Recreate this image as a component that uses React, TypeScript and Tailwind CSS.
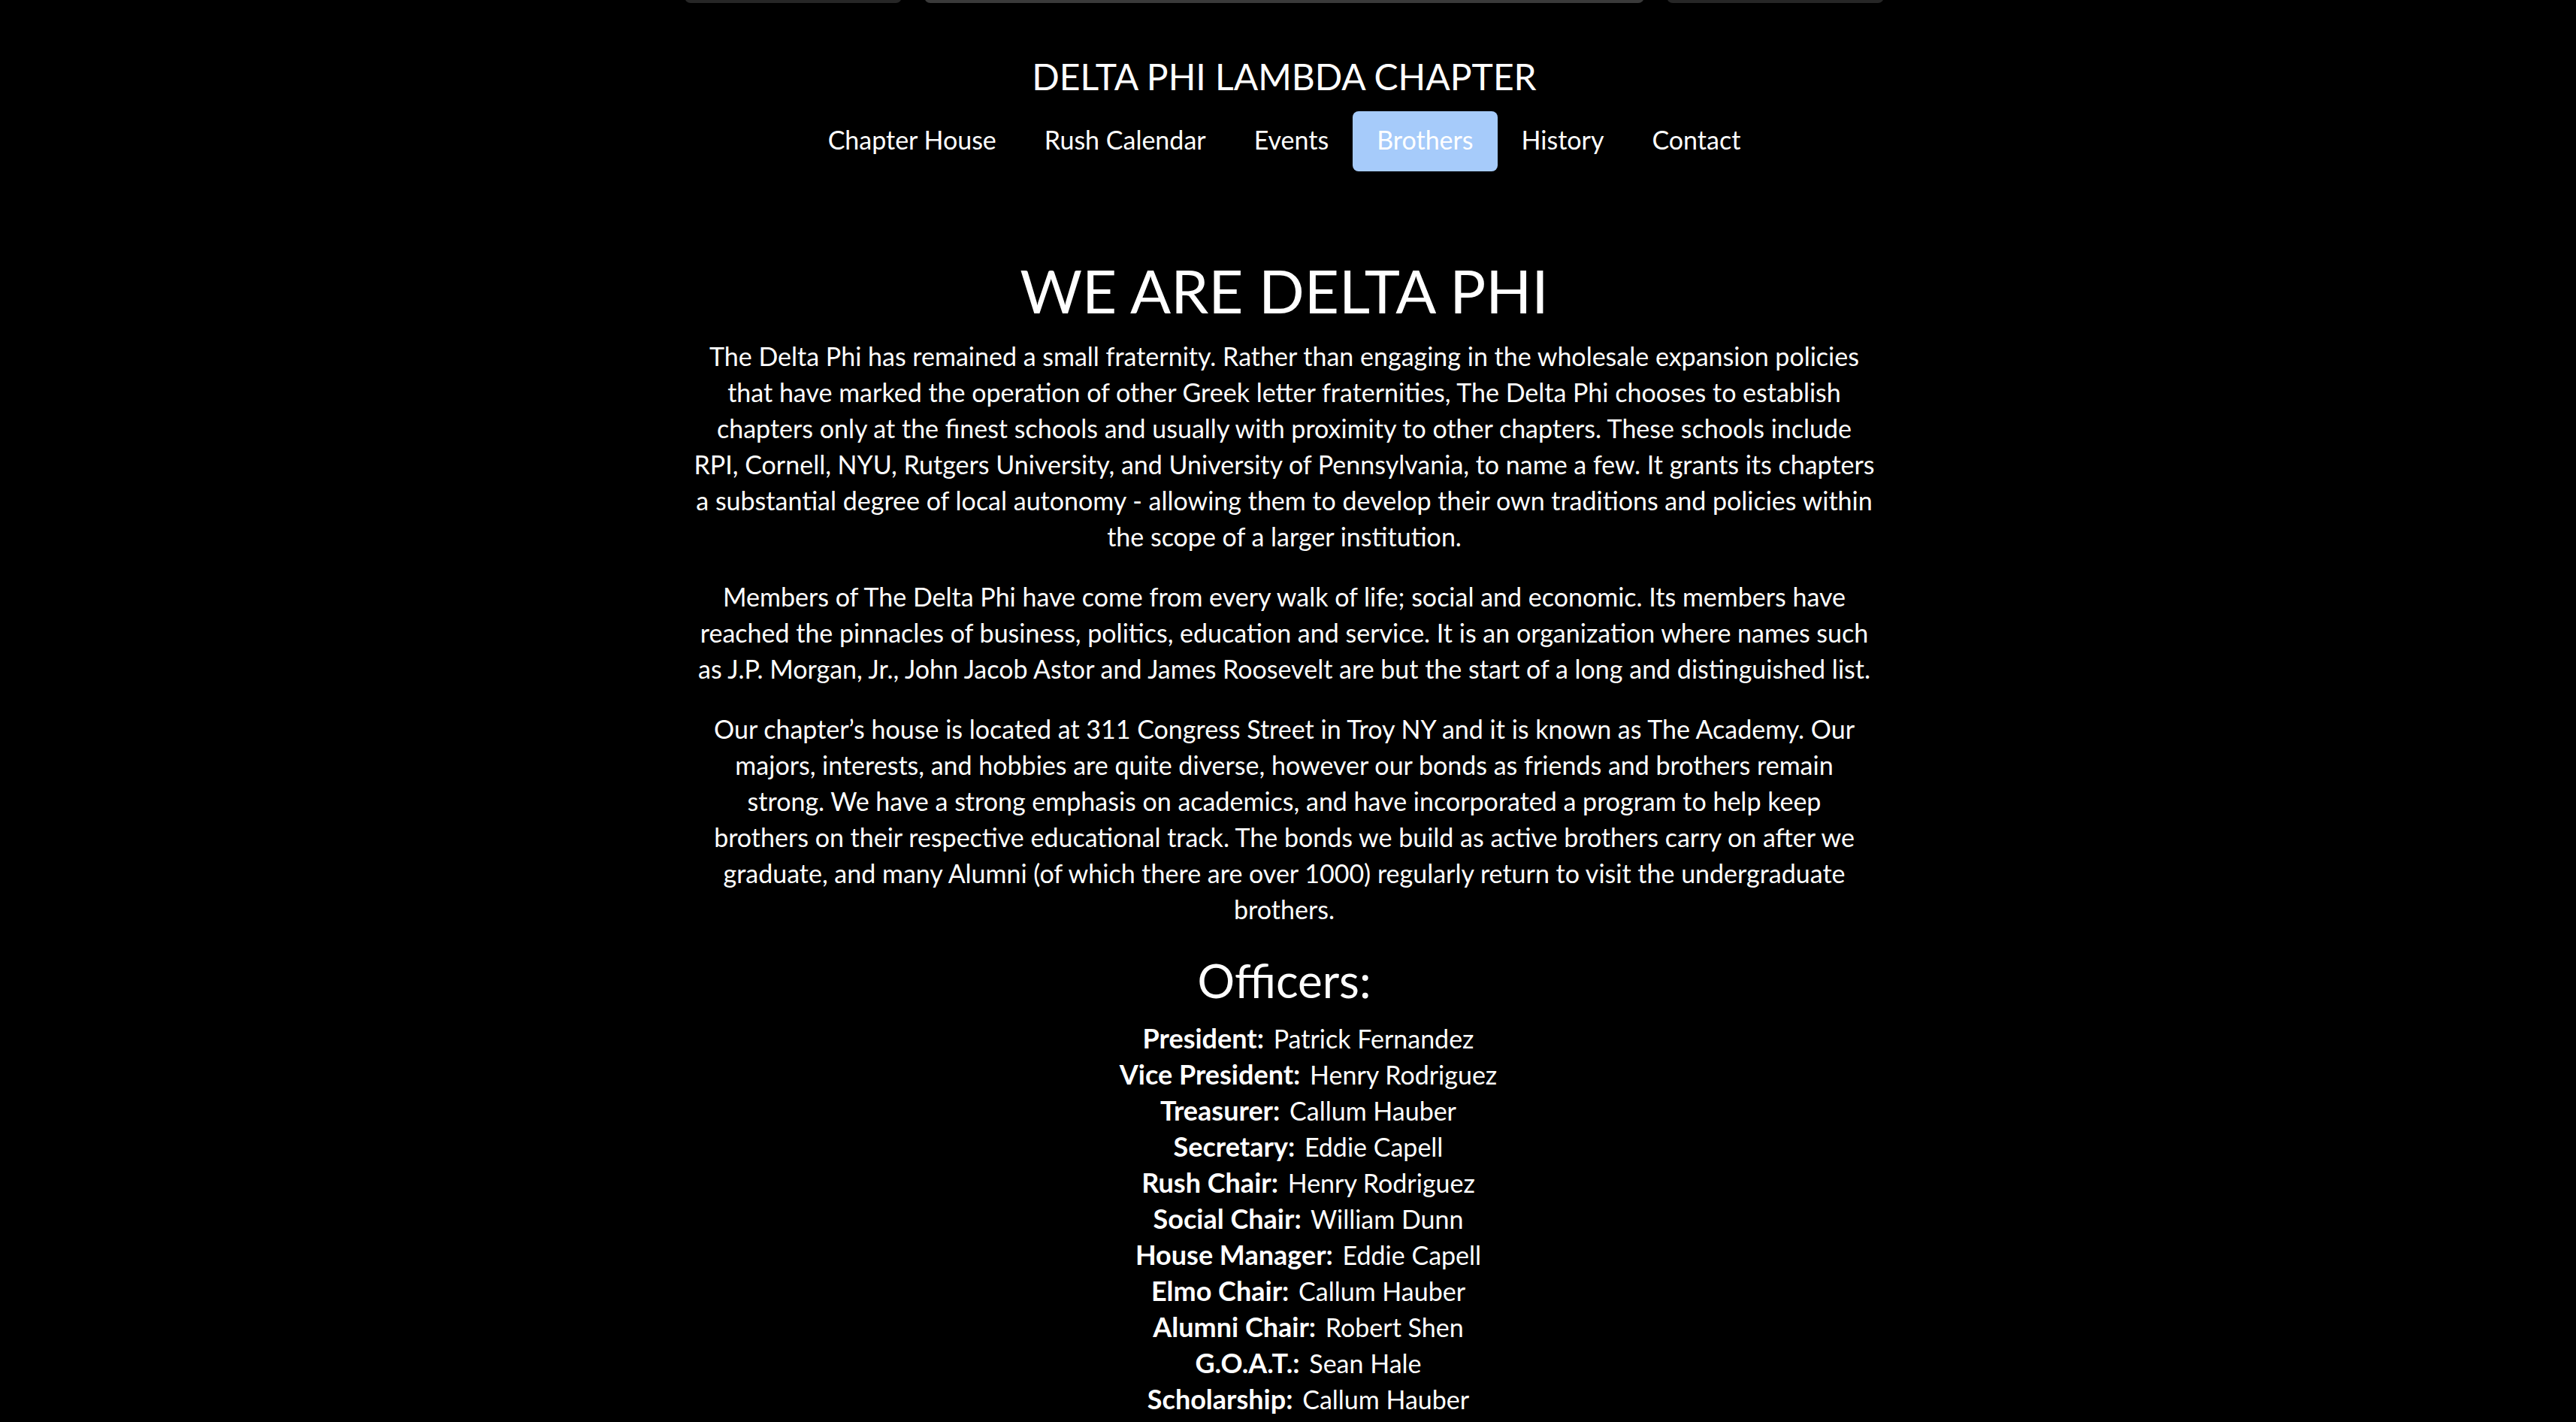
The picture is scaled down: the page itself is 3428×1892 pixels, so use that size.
const navItems = ["Chapter House", "Rush Calendar", "Events", "Brothers", "History", "Contact"];

const paragraphs = [
  `The Delta Phi has remained a small fraternity. Rather than engaging in the wholesale expansion policies
that have marked the operation of other Greek letter fraternities, The Delta Phi chooses to establish
chapters only at the finest schools and usually with proximity to other chapters. These schools include
RPI, Cornell, NYU, Rutgers University, and University of Pennsylvania, to name a few. It grants its chapters
a substantial degree of local autonomy - allowing them to develop their own traditions and policies within
the scope of a larger institution.`,
  `Members of The Delta Phi have come from every walk of life; social and economic. Its members have
reached the pinnacles of business, politics, education and service. It is an organization where names such
as J.P. Morgan, Jr., John Jacob Astor and James Roosevelt are but the start of a long and distinguished list.`,
  `Our chapter’s house is located at 311 Congress Street in Troy NY and it is known as The Academy. Our
majors, interests, and hobbies are quite diverse, however our bonds as friends and brothers remain
strong. We have a strong emphasis on academics, and have incorporated a program to help keep
brothers on their respective educational track. The bonds we build as active brothers carry on after we
graduate, and many Alumni (of which there are over 1000) regularly return to visit the undergraduate
brothers.`,
];

const officers = [
  ["President", "Patrick Fernandez"],
  ["Vice President", "Henry Rodriguez"],
  ["Treasurer", "Callum Hauber"],
  ["Secretary", "Eddie Capell"],
  ["Rush Chair", "Henry Rodriguez"],
  ["Social Chair", "William Dunn"],
  ["House Manager", "Eddie Capell"],
  ["Elmo Chair", "Callum Hauber"],
  ["Alumni Chair", "Robert Shen"],
  ["G.O.A.T.", "Sean Hale"],
  ["Scholarship", "Callum Hauber"],
];

export default function App() {
  return (
    <div className="flex min-h-screen flex-col items-center bg-black pr-2.5 text-center font-['Lato',sans-serif] text-[34px] leading-[48px] text-white">
      <div className="flex h-1 w-full max-w-[1596px] items-end gap-[30px] overflow-hidden">
        <div className="h-8 grow rounded-lg bg-[#262626]" />
        <div className="h-8 w-3/5 rounded-lg bg-[#3a3a3a]" />
        <div className="h-8 grow rounded-lg bg-[#262626]" />
      </div>

      <header className="mt-17 flex flex-col items-center">
        <p className="mb-4 text-[48px] leading-[60px]">DELTA PHI LAMBDA CHAPTER</p>
        <nav aria-label="Main">
          <ul className="flex flex-wrap justify-center">
            {navItems.map((item) => (
              <li key={item}>
                <a
                  href={`#${item.toLowerCase().replace(" ", "-")}`}
                  aria-current={item === "Brothers" ? "page" : undefined}
                  className="block rounded-lg px-8 pt-3.5 pb-4.5 aria-[current=page]:bg-[#a6cbfa]"
                >
                  {item}
                </a>
              </li>
            ))}
          </ul>
        </nav>
      </header>

      <main className="mt-[110px] w-full max-w-[1596px]">
        <h1 className="mb-4 text-[80px] leading-[96px]">WE ARE DELTA PHI</h1>
        {paragraphs.map((text) => (
          <p key={text} className="mb-8 whitespace-pre-line">
            {text}
          </p>
        ))}
        <h2 className="mb-4 text-[62px] leading-[76px]">Officers:</h2>
        <ul>
          {officers.map(([role, name]) => (
            <li key={role} className="pl-16">
              <strong className="mr-1 text-[36px] leading-none font-bold">{role}:</strong> {name}
            </li>
          ))}
        </ul>
      </main>
    </div>
  );
}
